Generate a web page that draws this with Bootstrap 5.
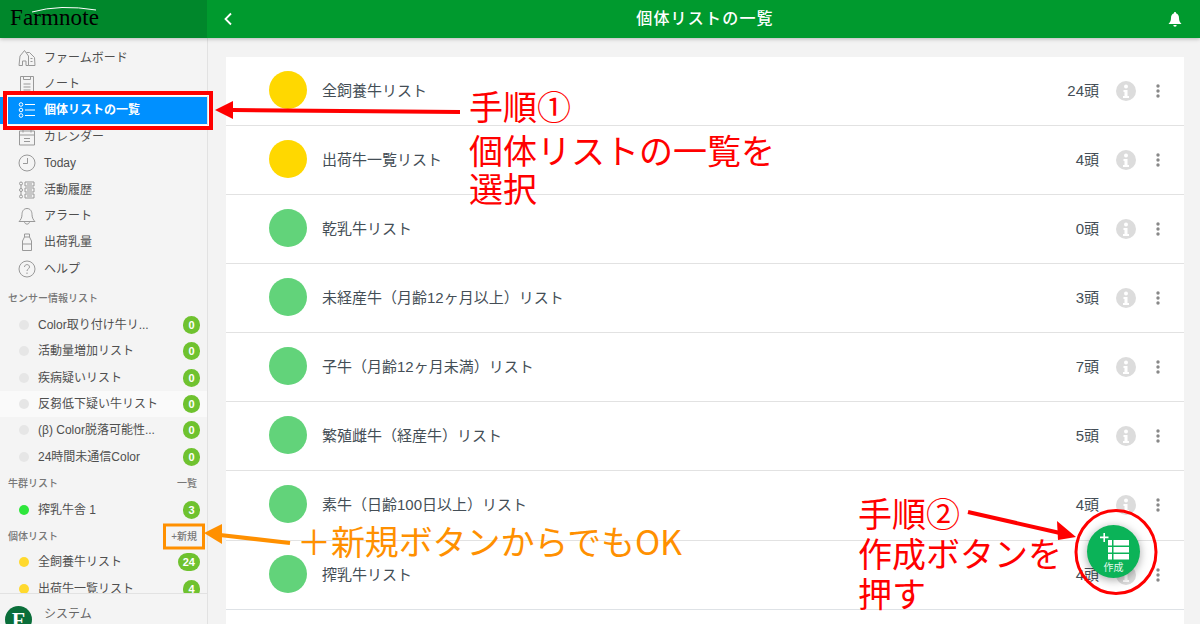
<!DOCTYPE html>
<html lang="ja">
<head>
<meta charset="UTF-8">
<title>個体リストの一覧</title>
<link href="https://cdn.jsdelivr.net/npm/bootstrap@5.3.3/dist/css/bootstrap.min.css" rel="stylesheet">
<style>
html, body { height: 624px; overflow: hidden; }
body { font-family: "Liberation Sans", "Noto Sans CJK JP", sans-serif; background: #f3f3f3; color: #444e56; position: relative; }
.top-bar { height: 38px; padding: 0; background: #009a2e; flex-wrap: nowrap; box-shadow: 0 1px 4px rgba(0,0,0,.25); z-index: 2; }
.brand-box { width: 207px; height: 38px; background: #00872b; padding: 0 0 1px 10px; margin: 0; color: #fff; font-family: "Liberation Serif", serif; font-size: 23px; letter-spacing: .1px; position: relative; }
.brand-box svg { position: absolute; left: 10px; top: 6px; }
.bar-title { font-size: 16px; font-weight: 500; color: #fff; letter-spacing: 1.2px; padding-left: 3px; }
.bar-btn { width: 44px; }
.bar-btn-left { padding-right: 2px; }
.bar-btn-right { padding-right: 6px; }
.page-body { height: 586px; overflow: hidden; }
.side-col { width: 208px; background: #f4f4f4; border-right: 1px solid #e2e2e2; }
.side-scroll { height: 555px; overflow: hidden; padding-top: 6.4px; }
.menu-item { height: 26.4px; padding-left: 18px; gap: 8px; font-size: 12px; color: #4f4f4f; }
.menu-item svg { flex: none; }
.menu-on { background: #0090ff; color: #fff; font-weight: 700; }
.sec-head { height: 26.4px; padding: 0 10px 0 8px; font-size: 10px; color: #777; font-weight: 500; margin-top: 0; }
.sec-first { margin-top: 3.4px; }
.cow-item { height: 26.4px; padding: 0 7px 0 19px; font-size: 12px; color: #4f4f4f; }
.cow-hover { background: #fafafa; }
.cow-dot { width: 10px; height: 10px; border-radius: 50%; margin-right: 9px; flex: none; background: #e6e6e6; }
.dot-green { background: #2ee63c; }
.dot-yellow { background: #ffd92e; }
.count-pill { background: #6fc22f; font-size: 11px; line-height: 12px; padding: 3px 5px; min-width: 17px; margin-left: auto; }
.side-foot { height: 31px; border-top: 1px solid #e2e2e2; background: #f4f4f4; padding-left: 5px; gap: 12px; font-size: 12px; color: #666; overflow: hidden; align-items: flex-start; }
.foot-logo { width: 27px; height: 27px; border-radius: 50%; background: #0a6e3a; color: #fff; font-family: "Liberation Serif", serif; font-weight: 700; font-size: 22px; line-height: 27px; text-align: center; margin-top: 12px; flex: none; }
.foot-name { margin-top: 12px; line-height: 16px; }
.main-col { padding: 19px 16px 0 18px; }
.cow-list { background: #fff; border-radius: 0; }
.cow-row { height: 69px; padding: 0 0 0 43px; border-color: #e2e2e2; font-size: 15px; color: #444e56; gap: 15px; flex: none; }
.cow-row:nth-child(7), .cow-row:nth-child(8) { height: 69.5px; }
.big-dot { width: 38px; height: 38px; border-radius: 50%; background: #62d37a; flex: none; margin-top: -2px; }
.big-yellow { background: #ffd800; }
.row-count { margin-left: auto; }
.row-info { width: 20px; height: 20px; margin-left: 2px; flex: none; }
.row-more { width: 4px; margin: 0 24px 0 5px; flex: none; }
.fab-btn { position: absolute; left: 1087px; top: 525px; width: 53px; height: 53px; border-radius: 50%; background: #0bb358; box-shadow: 0 2px 10px rgba(0,0,0,.35); color: #e4f7ec; font-size: 10px; text-align: center; padding-top: 37px; line-height: 12px; z-index: 3; }
.fab-btn svg { position: absolute; left: 13px; top: 8px; }
.mark-layer { position: absolute; left: 0; top: 0; z-index: 4; pointer-events: none; }
.note-red, .note-orange { position: absolute; z-index: 5; font-size: 34px; line-height: 40px; white-space: nowrap; font-family: "Noto Sans CJK JP", sans-serif; }
.note-red { color: #f00; }
.note-orange { color: #ff9000; letter-spacing: -.1px; }
.note-one { left: 469px; top: 86px; }
.note-two { left: 858px; top: 493px; }
.note-one span, .note-two span { display: block; }
.note-gap { margin-top: 4px; }
.note-tight { margin-top: -2px; }
.note-new { left: 297px; top: 521px; }
</style>
</head>
<body>

<!-- ヘッダー -->
<nav class="navbar top-bar d-flex align-items-center">
    <div class="navbar-brand brand-box d-flex align-items-center">
        Farmnote
        <svg width="90" height="8" viewBox="0 0 90 8"><path d="M22 6Q50-2 86 4" fill="none" stroke="#fff" stroke-width="1"/></svg>
    </div>
    <div class="bar-btn bar-btn-left d-flex justify-content-center">
        <svg width="10" height="14" viewBox="0 0 10 14"><path d="M8 1.500 2.500 7 8 12.500" fill="none" stroke="#fff" stroke-width="1.800"/></svg>
    </div>
    <div class="bar-title flex-grow-1 text-center">個体リストの一覧</div>
    <div class="bar-btn bar-btn-right d-flex justify-content-center">
        <svg width="14" height="15" viewBox="0 0 14 15"><path d="M7 0a1 1 0 0 1 1 1.200C10.300 2 11 4 11 6c0 3 1 4.500 2.500 6H.5C2 10.500 3 9 3 6c0-2 .7-4 3-4.800A1 1 0 0 1 7 0zM5.300 13h3.400a1.700 1.700 0 0 1-3.400 0z" fill="#fff"/></svg>
    </div>
</nav>

<div class="page-body d-flex">
    <!-- サイドメニュー -->
    <div class="side-col d-flex flex-column flex-none">
        <div class="side-scroll">
            <div class="menu-item d-flex align-items-center">
                <svg width="18" height="18" viewBox="0 0 18 18" fill="none" stroke="#999"><path d="M1 16.500 2 7 6.500 1.500 10.500 7v9.500H8V12H4.500v4.500zM8.500 3.500h3l5 5 .5 8h-6.500"/><path d="M12.500 9.500h2M12.500 12.500h2"/></svg>
                ファームボード
            </div>
            <div class="menu-item d-flex align-items-center">
                <svg width="18" height="18" viewBox="0 0 18 18" fill="none" stroke="#999"><path d="M2.500 1.500h13v16h-13zM5.500 1.500v3h7v-3M5.500 9h7M5.500 12h7M5.500 15h7"/></svg>
                ノート
            </div>
            <div class="menu-item menu-on d-flex align-items-center">
                <svg width="18" height="18" viewBox="0 0 18 18" fill="none" stroke="#fff"><circle cx="3" cy="3.500" r="1.800"/><circle cx="3" cy="9" r="1.800"/><circle cx="3" cy="14.500" r="1.800"/><path d="M7 3.500h10M7 9h10M7 14.500h10"/></svg>
                個体リストの一覧
            </div>
            <div class="menu-item d-flex align-items-center">
                <svg width="18" height="18" viewBox="0 0 18 18" fill="none" stroke="#999"><path d="M1.500 3h15v14h-15zM1.500 7h15M5 .5v4M13 .5v4M6 10.500h6M6 13.500h6"/></svg>
                カレンダー
            </div>
            <div class="menu-item d-flex align-items-center">
                <svg width="18" height="18" viewBox="0 0 18 18" fill="none" stroke="#999"><circle cx="9" cy="9" r="8"/><path d="M9.500 4v5.500H5"/></svg>
                Today
            </div>
            <div class="menu-item d-flex align-items-center">
                <svg width="18" height="18" viewBox="0 0 18 18" fill="none" stroke="#999"><circle cx="3" cy="2.500" r="1.500"/><circle cx="3" cy="9" r="1.500"/><circle cx="3" cy="15.500" r="1.500"/><path d="M3 4v3.500M3 10.500V14M7 1h9v4H7zM7 7h9v4H7zM7 13h9v4H7zM9 3h5M9 9h5M9 15h5"/></svg>
                活動履歴
            </div>
            <div class="menu-item d-flex align-items-center">
                <svg width="18" height="18" viewBox="0 0 18 18" fill="none" stroke="#999"><path d="M9 1.500c3.500 0 5 3 5 6 0 3.500 1.500 5.500 3 7H1c1.500-1.500 3-3.500 3-7 0-3 1.500-6 5-6zM6.500 14.500c0 3.500 5 3.500 5 0"/></svg>
                アラート
            </div>
            <div class="menu-item d-flex align-items-center">
                <svg width="18" height="18" viewBox="0 0 18 18" fill="none" stroke="#999"><path d="M6.500 1h5v3h-5zM6.500 4 4.500 8v9.500h9V8l-2-4M4.500 11h9"/></svg>
                出荷乳量
            </div>
            <div class="menu-item d-flex align-items-center">
                <svg width="18" height="18" viewBox="0 0 18 18" fill="none" stroke="#999"><circle cx="9" cy="9" r="8"/><path d="M6.500 7c0-3.200 5-3.200 5 0 0 2-2.500 1.800-2.500 4"/><path d="M9 12.500v1.500"/></svg>
                ヘルプ
            </div>

            <div class="sec-head sec-first d-flex align-items-center">センサー情報リスト</div>
            <div class="cow-item d-flex align-items-center"><span class="cow-dot"></span>Color取り付け牛リ...<span class="badge rounded-pill count-pill">0</span></div>
            <div class="cow-item d-flex align-items-center"><span class="cow-dot"></span>活動量増加リスト<span class="badge rounded-pill count-pill">0</span></div>
            <div class="cow-item d-flex align-items-center"><span class="cow-dot"></span>疾病疑いリスト<span class="badge rounded-pill count-pill">0</span></div>
            <div class="cow-item cow-hover d-flex align-items-center"><span class="cow-dot"></span>反芻低下疑い牛リスト<span class="badge rounded-pill count-pill">0</span></div>
            <div class="cow-item d-flex align-items-center"><span class="cow-dot"></span>(β) Color脱落可能性...<span class="badge rounded-pill count-pill">0</span></div>
            <div class="cow-item d-flex align-items-center"><span class="cow-dot"></span>24時間未通信Color<span class="badge rounded-pill count-pill">0</span></div>

            <div class="sec-head d-flex align-items-center justify-content-between">牛群リスト<span>一覧</span></div>
            <div class="cow-item d-flex align-items-center"><span class="cow-dot dot-green"></span>搾乳牛舎 1<span class="badge rounded-pill count-pill">3</span></div>

            <div class="sec-head d-flex align-items-center justify-content-between">個体リスト<span>+新規</span></div>
            <div class="cow-item d-flex align-items-center"><span class="cow-dot dot-yellow"></span>全飼養牛リスト<span class="badge rounded-pill count-pill">24</span></div>
            <div class="cow-item d-flex align-items-center"><span class="cow-dot dot-yellow"></span>出荷牛一覧リスト<span class="badge rounded-pill count-pill">4</span></div>
        </div>
        <div class="side-foot d-flex">
            <div class="foot-logo">F</div>
            <div class="foot-name">システム</div>
        </div>
    </div>

    <!-- 個体リスト -->
    <div class="main-col flex-grow-1 d-flex flex-column">
        <ul class="list-group list-group-flush cow-list flex-grow-1">
            <li class="list-group-item cow-row d-flex align-items-center"><span class="big-dot big-yellow"></span>全飼養牛リスト<span class="row-count">24頭</span>
                <svg class="row-info" viewBox="0 0 20 20"><circle cx="10" cy="10" r="10" fill="#dcdcdc"/><circle cx="10" cy="5.500" r="2" fill="#fff"/><path d="M7.500 9h4v6h1.500v2H7v-2h1.500v-4h-1z" fill="#fff"/></svg>
                <svg class="row-more" width="4" height="14" viewBox="0 0 4 14"><circle cx="2" cy="2" r="1.700" fill="#888"/><circle cx="2" cy="7" r="1.700" fill="#888"/><circle cx="2" cy="12" r="1.700" fill="#888"/></svg></li>
            <li class="list-group-item cow-row d-flex align-items-center"><span class="big-dot big-yellow"></span>出荷牛一覧リスト<span class="row-count">4頭</span>
                <svg class="row-info" viewBox="0 0 20 20"><circle cx="10" cy="10" r="10" fill="#dcdcdc"/><circle cx="10" cy="5.500" r="2" fill="#fff"/><path d="M7.500 9h4v6h1.500v2H7v-2h1.500v-4h-1z" fill="#fff"/></svg>
                <svg class="row-more" width="4" height="14" viewBox="0 0 4 14"><circle cx="2" cy="2" r="1.700" fill="#888"/><circle cx="2" cy="7" r="1.700" fill="#888"/><circle cx="2" cy="12" r="1.700" fill="#888"/></svg></li>
            <li class="list-group-item cow-row d-flex align-items-center"><span class="big-dot"></span>乾乳牛リスト<span class="row-count">0頭</span>
                <svg class="row-info" viewBox="0 0 20 20"><circle cx="10" cy="10" r="10" fill="#dcdcdc"/><circle cx="10" cy="5.500" r="2" fill="#fff"/><path d="M7.500 9h4v6h1.500v2H7v-2h1.500v-4h-1z" fill="#fff"/></svg>
                <svg class="row-more" width="4" height="14" viewBox="0 0 4 14"><circle cx="2" cy="2" r="1.700" fill="#888"/><circle cx="2" cy="7" r="1.700" fill="#888"/><circle cx="2" cy="12" r="1.700" fill="#888"/></svg></li>
            <li class="list-group-item cow-row d-flex align-items-center"><span class="big-dot"></span>未経産牛（月齢12ヶ月以上）リスト<span class="row-count">3頭</span>
                <svg class="row-info" viewBox="0 0 20 20"><circle cx="10" cy="10" r="10" fill="#dcdcdc"/><circle cx="10" cy="5.500" r="2" fill="#fff"/><path d="M7.500 9h4v6h1.500v2H7v-2h1.500v-4h-1z" fill="#fff"/></svg>
                <svg class="row-more" width="4" height="14" viewBox="0 0 4 14"><circle cx="2" cy="2" r="1.700" fill="#888"/><circle cx="2" cy="7" r="1.700" fill="#888"/><circle cx="2" cy="12" r="1.700" fill="#888"/></svg></li>
            <li class="list-group-item cow-row d-flex align-items-center"><span class="big-dot"></span>子牛（月齢12ヶ月未満）リスト<span class="row-count">7頭</span>
                <svg class="row-info" viewBox="0 0 20 20"><circle cx="10" cy="10" r="10" fill="#dcdcdc"/><circle cx="10" cy="5.500" r="2" fill="#fff"/><path d="M7.500 9h4v6h1.500v2H7v-2h1.500v-4h-1z" fill="#fff"/></svg>
                <svg class="row-more" width="4" height="14" viewBox="0 0 4 14"><circle cx="2" cy="2" r="1.700" fill="#888"/><circle cx="2" cy="7" r="1.700" fill="#888"/><circle cx="2" cy="12" r="1.700" fill="#888"/></svg></li>
            <li class="list-group-item cow-row d-flex align-items-center"><span class="big-dot"></span>繁殖雌牛（経産牛）リスト<span class="row-count">5頭</span>
                <svg class="row-info" viewBox="0 0 20 20"><circle cx="10" cy="10" r="10" fill="#dcdcdc"/><circle cx="10" cy="5.500" r="2" fill="#fff"/><path d="M7.500 9h4v6h1.500v2H7v-2h1.500v-4h-1z" fill="#fff"/></svg>
                <svg class="row-more" width="4" height="14" viewBox="0 0 4 14"><circle cx="2" cy="2" r="1.700" fill="#888"/><circle cx="2" cy="7" r="1.700" fill="#888"/><circle cx="2" cy="12" r="1.700" fill="#888"/></svg></li>
            <li class="list-group-item cow-row d-flex align-items-center"><span class="big-dot"></span>素牛（日齢100日以上）リスト<span class="row-count">4頭</span>
                <svg class="row-info" viewBox="0 0 20 20"><circle cx="10" cy="10" r="10" fill="#dcdcdc"/><circle cx="10" cy="5.500" r="2" fill="#fff"/><path d="M7.500 9h4v6h1.500v2H7v-2h1.500v-4h-1z" fill="#fff"/></svg>
                <svg class="row-more" width="4" height="14" viewBox="0 0 4 14"><circle cx="2" cy="2" r="1.700" fill="#888"/><circle cx="2" cy="7" r="1.700" fill="#888"/><circle cx="2" cy="12" r="1.700" fill="#888"/></svg></li>
            <li class="list-group-item cow-row d-flex align-items-center border-bottom"><span class="big-dot"></span>搾乳牛リスト<span class="row-count">4頭</span>
                <svg class="row-info" viewBox="0 0 20 20"><circle cx="10" cy="10" r="10" fill="#dcdcdc"/><circle cx="10" cy="5.500" r="2" fill="#fff"/><path d="M7.500 9h4v6h1.500v2H7v-2h1.500v-4h-1z" fill="#fff"/></svg>
                <svg class="row-more" width="4" height="14" viewBox="0 0 4 14"><circle cx="2" cy="2" r="1.700" fill="#888"/><circle cx="2" cy="7" r="1.700" fill="#888"/><circle cx="2" cy="12" r="1.700" fill="#888"/></svg></li>
        </ul>
    </div>
</div>

<!-- 作成ボタン -->
<div class="fab-btn">
    <svg width="29" height="28" viewBox="0 0 29 28" fill="#fff"><path d="M3.400 0h1.600v3.600H8.500v1.600H5V9H3.400V5.200H0V3.600h3.400z"/><path d="M8 7h4v5.600H8zM13.500 7H29v5.600H13.500zM8 14h4v5.600H8zM13.500 14H29v5.600H13.500zM8 21h4v5.600H8zM13.500 21H29v5.600H13.500z"/></svg>
    作成
</div>

<!-- 説明の書き込み -->
<svg class="mark-layer" width="1200" height="624" viewBox="0 0 1200 624" fill="none">
    <rect x="5" y="93" width="206" height="35" stroke="#f00" stroke-width="4"/>
    <rect x="7.500" y="95.500" width="201" height="30" stroke="#fff" stroke-width="1"/>
    <path d="M233 110 460 112" stroke="#f00" stroke-width="4"/>
    <path d="M215 110 233 101v18z" fill="#f00"/>
    <rect x="164.500" y="525" width="39" height="23" stroke="#ff9000" stroke-width="3"/>
    <path d="M220 535 290 543" stroke="#ff9000" stroke-width="4"/>
    <path d="M204 533 222 524v20z" fill="#ff9000"/>
    <path d="M968 512 1060 533" stroke="#f00" stroke-width="4"/>
    <path d="M1076 537 1057 521 1058 540z" fill="#f00"/>
    <ellipse cx="1116" cy="552" rx="40" ry="41.500" stroke="#f00" stroke-width="3"/>
</svg>
<div class="note-red note-one"><span>手順①</span><span class="note-gap">個体リストの一覧を</span><span class="note-tight">選択</span></div>
<div class="note-orange note-new">＋新規ボタンからでもOK</div>
<div class="note-red note-two"><span>手順②</span><span>作成ボタンを</span><span>押す</span></div>

<script src="https://cdn.jsdelivr.net/npm/bootstrap@5.3.3/dist/js/bootstrap.bundle.min.js"></script>
</body>
</html>
